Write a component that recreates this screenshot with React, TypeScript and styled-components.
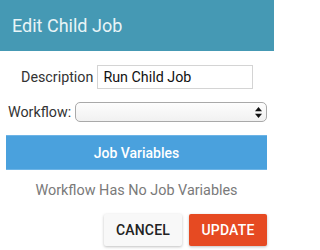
import React, { useState } from 'react';
import styled, { createGlobalStyle } from 'styled-components';

const GlobalStyle = createGlobalStyle`
  html, body {
    margin: 0;
    padding: 0;
    background: #ffffff;
    font-family: Roboto, "Liberation Sans", sans-serif;
  }
`;

const Dialog = styled.div`
  width: 274px;
  height: 250px;
  display: flex;
  flex-direction: column;
  background: #fff;
  overflow: hidden;
`;

const Header = styled.div`
  height: 51px;
  background: #4599b4;
  display: flex;
  align-items: center;
  padding: 0 12px 1px;
  box-sizing: border-box;
`;

const Title = styled.h2`
  margin: 0;
  font-size: 18px;
  font-weight: 400;
  color: #e8f4f7;
`;

const Body = styled.div`
  display: flex;
  flex-direction: column;
  padding: 14px 7px 0 6px;
`;

const Row = styled.div<{ $indent?: number }>`
  display: flex;
  align-items: center;
  gap: 4px;
  padding-left: ${(p) => p.$indent ?? 0}px;
  margin-bottom: 13px;
`;

const Label = styled.label`
  font-size: 14.3px;
  color: #333;
`;

const TextInput = styled.input`
  width: 156px;
  height: 24px;
  box-sizing: border-box;
  border: 1px solid #d4d4d4;
  padding: 0 5px;
  font-family: Roboto, "Liberation Sans", sans-serif;
  font-size: 14.3px;
  color: #111;
  outline: none;
`;

const SelectBox = styled.div`
  flex: 1;
  height: 20px;
  box-sizing: border-box;
  border: 1px solid #a9a9a9;
  border-radius: 5px;
  background: linear-gradient(#fdfdfd, #f1f1f1);
  display: flex;
  align-items: center;
  justify-content: flex-end;
  padding-right: 4px;
`;

const SectionBar = styled.div`
  height: 35px;
  background: #4aa1dd;
  border-top: 1px solid #6db4e6;
  border-bottom: 1px solid #6db4e6;
  box-sizing: border-box;
  display: flex;
  align-items: center;
  justify-content: center;
  font-size: 14px;
  font-weight: 500;
  color: #fff;
`;

const EmptyNote = styled.div`
  text-align: center;
  font-size: 14.4px;
  color: #7a7a7a;
  margin-top: 12px;
`;

const Actions = styled.div`
  display: flex;
  justify-content: flex-end;
  gap: 7px;
  margin-top: 15px;
`;

const Button = styled.button<{ $primary?: boolean }>`
  width: 78px;
  height: 32px;
  border: none;
  border-radius: 2px;
  font-family: Roboto, "Liberation Sans", sans-serif;
  font-size: 14px;
  font-weight: 500;
  letter-spacing: 0.2px;
  background: ${(p) => (p.$primary ? '#e64a22' : '#f8f8f8')};
  color: ${(p) => (p.$primary ? '#fff' : '#222')};
  box-shadow: 0 1px 3px rgba(0, 0, 0, 0.25);
  cursor: pointer;
`;

const Arrows = () => (
  <svg width="7" height="11" viewBox="0 0 7 11">
    <path d="M3.5 0 L7 4.3 H0 Z" fill="#111" />
    <path d="M3.5 11 L7 6.7 H0 Z" fill="#111" />
  </svg>
);

export default function App() {
  const [description, setDescription] = useState('Run Child Job');

  return (
    <>
      <GlobalStyle />
      <Dialog>
        <Header>
          <Title>Edit Child Job</Title>
        </Header>
        <Body>
          <Row $indent={15}>
            <Label>Description</Label>
            <TextInput value={description} onChange={(e) => setDescription(e.target.value)} />
          </Row>
          <Row $indent={2}>
            <Label>Workflow:</Label>
            <SelectBox>
              <Arrows />
            </SelectBox>
          </Row>
          <SectionBar>Job Variables</SectionBar>
          <EmptyNote>Workflow Has No Job Variables</EmptyNote>
          <Actions>
            <Button>CANCEL</Button>
            <Button $primary>UPDATE</Button>
          </Actions>
        </Body>
      </Dialog>
    </>
  );
}
